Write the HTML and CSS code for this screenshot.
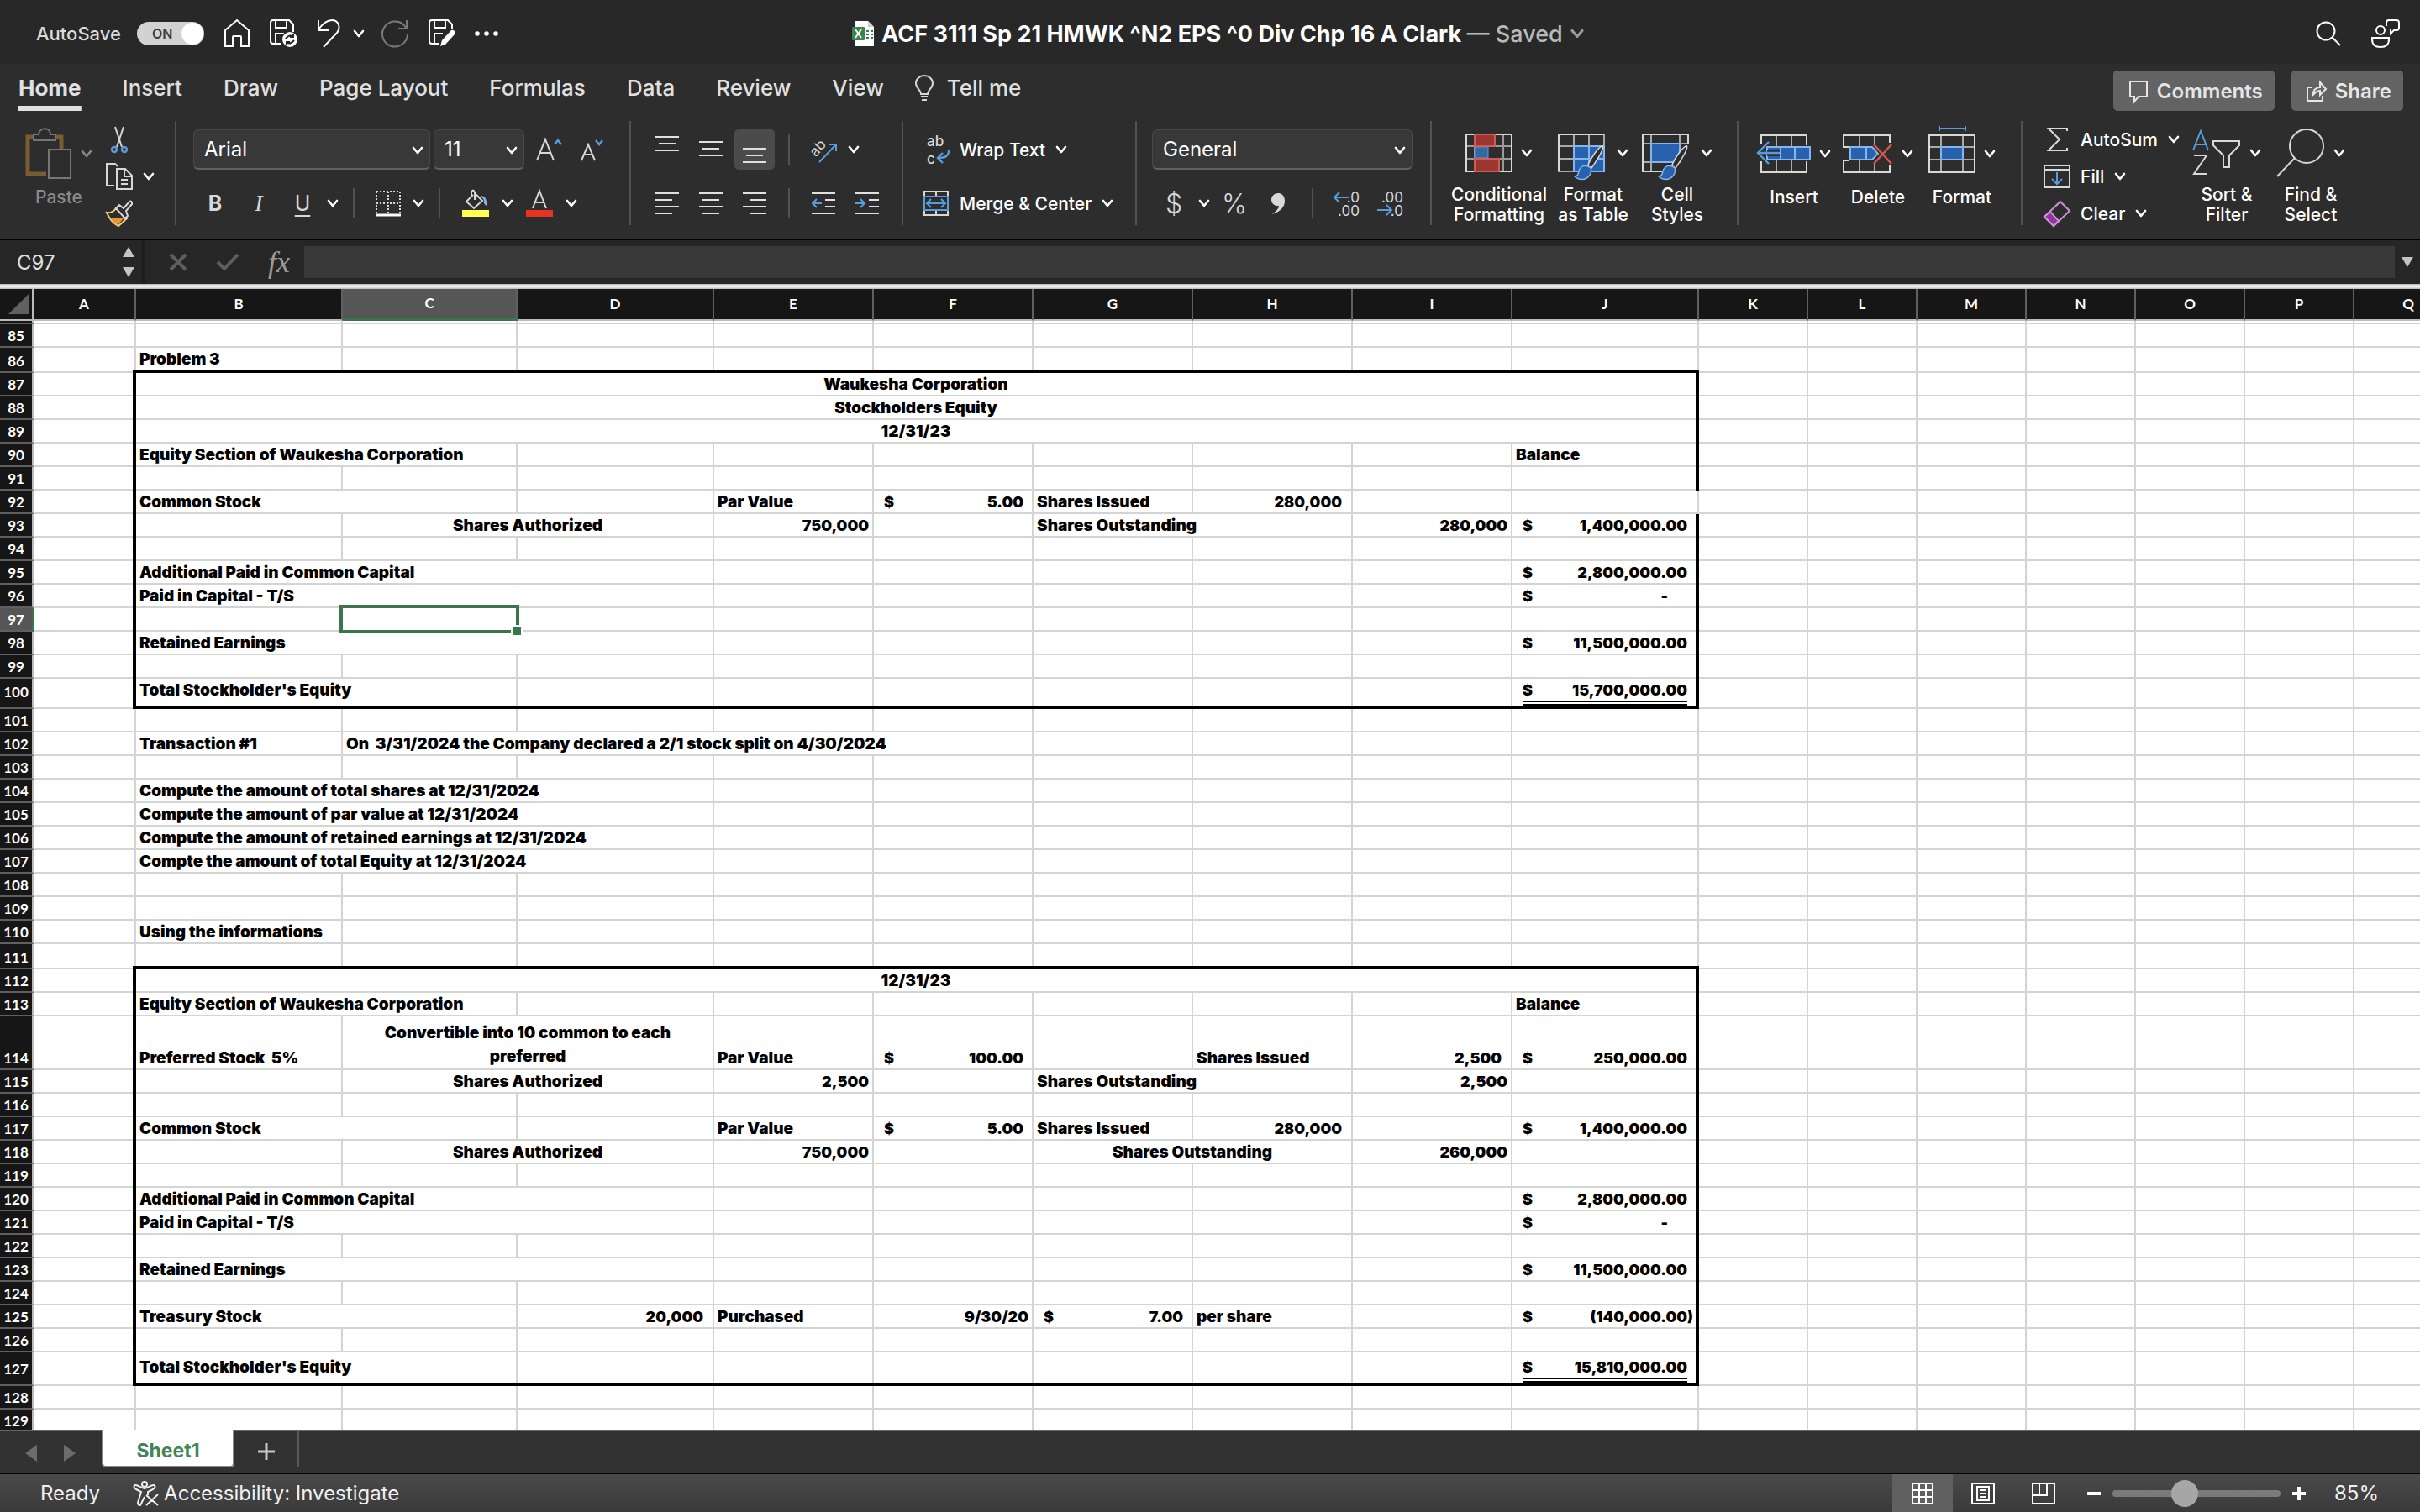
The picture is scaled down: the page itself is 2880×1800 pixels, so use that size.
FILE: index.html
```
<!DOCTYPE html>
<html lang="en">
<head>
    <meta charset="UTF-8">
    <meta name="viewport" content="width=device-width, initial-scale=1.0">
    <title>ACF 3111 Sp 21 HMWK ^N2 EPS ^0 Div Chp 16 A Clark</title>
    <link rel="stylesheet" href="styles.css">
</head>
<body>
    <!-- Shared icons -->
    <svg class="defs" aria-hidden="true">
        <symbol id="chev" viewBox="0 0 14 10"><path d="M2 2l5 6 5-6" fill="none" stroke="currentColor" stroke-width="2.6" stroke-linecap="round" stroke-linejoin="round"/></symbol>
        <symbol id="brush" viewBox="0 0 48 56"><path d="M46 1C40 1 27 20 22 32l6 4C35 26 48 6 46 1z" fill="#2d2d2d" stroke="#d8d8d8" stroke-width="2"/><path d="M27 36c2 10-5 18-14 18-5 0-9-2-12-5 5 0 6-3 7-8 2-8 11-12 19-5z" fill="#2862ae" stroke="#84b6ea" stroke-width="2"/></symbol>
    </svg>

    <div id="app">
        <header id="titlebar">
            <div class="quick">
                <label class="autosave" for="autosave">AutoSave</label>
                <span class="toggle"><input type="checkbox" id="autosave" checked><span class="toggle-text">ON</span></span>
                <button class="qbtn" aria-label="Home"><svg width="32" height="34" viewBox="0 0 32 34"><path d="M2 13L16 1l14 12v19h-9V21q0-1-1-1h-8q-1 0-1 1v11H2z" fill="none" stroke="#fff" stroke-width="2"/></svg></button>
                <button class="qbtn" aria-label="Save"><svg width="34" height="34" viewBox="0 0 34 34"><path d="M13 29H4q-3 0-3-3V4q0-3 3-3h19l5 5v9M7 1v9h13V1M7 29V17h10" fill="none" stroke="#fff" stroke-width="2"/><circle cx="24" cy="24" r="9" fill="#fff"/><path d="M19 23q5-6 9-2m0-4v4h-4M29 25q-5 6-9 2m0 4v-4h4" fill="none" stroke="#282828" stroke-width="2"/></svg></button>
                <button class="qbtn" aria-label="Undo"><svg width="28" height="34" viewBox="0 0 28 34"><path d="M1 1v12h12M1 12C6 5 11 1 17 1c8 0 11 9 6 15L7 33" fill="none" stroke="#fff" stroke-width="2"/></svg></button>
                <button class="chevbtn" aria-label="Undo list"><svg class="chev"><use href="#chev"/></svg></button>
                <button class="qbtn" aria-label="Redo"><svg width="34" height="34" viewBox="0 0 34 34"><path d="M31 1v10H21M30 10A15 15 0 1 0 32 18" fill="none" stroke="#7a7a7a" stroke-width="2"/></svg></button>
                <button class="qbtn" aria-label="Save as"><svg width="32" height="34" viewBox="0 0 32 34"><path d="M12 29H4q-3 0-3-3V4q0-3 3-3h19l5 5v6M7 1v9h13V1M7 29V17h10" fill="none" stroke="#fff" stroke-width="2"/><path d="M14 32l2-7 11-12q2-1 4 1 1 2 0 4L20 30z" fill="#fff"/></svg></button>
                <button class="qbtn" aria-label="More"><svg width="28" height="8" viewBox="0 0 28 8"><g fill="#fff"><circle cx="3" cy="4" r="2.8"/><circle cx="14" cy="4" r="2.8"/><circle cx="25" cy="4" r="2.8"/></g></svg></button>
            </div>
            <div class="doc">
                <svg width="28" height="32" viewBox="0 0 28 32"><path d="M5 1h15l7 7v23H5z" fill="#fff"/><path d="M20 1v7h7z" fill="#cfcfcf"/><path d="M18 12h3v2h-3zM23 12h3v2h-3zM18 16h3v2h-3zM23 16h3v2h-3zM18 20h3v2h-3zM23 20h3v2h-3z" fill="#2f7d4b"/><rect x="1" y="8" width="15" height="16" rx="1" fill="#3a8452"/><path d="M5 11l7 10M12 11L5 21" stroke="#fff" stroke-width="2"/></svg>
                <h1>ACF 3111 Sp 21 HMWK ^N2 EPS ^0 Div Chp 16 A Clark <span>— Saved</span></h1>
                <svg class="chev dim"><use href="#chev"/></svg>
            </div>
            <div class="right">
                <button class="qbtn" aria-label="Search"><svg width="30" height="30" viewBox="0 0 30 30"><circle cx="12" cy="12" r="10.5" fill="none" stroke="#fff" stroke-width="2"/><path d="M19 19l10 10" stroke="#fff" stroke-width="2"/></svg></button>
                <button class="qbtn" aria-label="Presence"><svg width="34" height="34" viewBox="0 0 34 34"><g fill="none" stroke="#fff" stroke-width="2"><circle cx="11" cy="13" r="5"/><path d="M1 22h20v2c0 6-4 9-10 9S1 30 1 24zM20 1h10q3 0 3 3v6q0 3-3 3h-3l-4 4v-4h-1M18 8V4q0-3 3-3"/></g></svg></button>
            </div>
        </header>

        <nav id="tabs">
            <button class="tab active">Home</button>
            <button class="tab">Insert</button>
            <button class="tab">Draw</button>
            <button class="tab">Page Layout</button>
            <button class="tab">Formulas</button>
            <button class="tab">Data</button>
            <button class="tab">Review</button>
            <button class="tab">View</button>
            <button class="tab tellme"><svg width="22" height="32" viewBox="0 0 22 32"><path d="M7 23c0-5-6-7-6-13a10 9 0 0 1 20 0c0 6-6 8-6 13zM7 26h8M8 30h6" fill="none" stroke="#d8d8d8" stroke-width="2"/></svg>Tell me</button>
            <div class="actions">
                <button class="pill"><svg width="24" height="26" viewBox="0 0 24 26"><path d="M2 1h20v18H12l-5 6v-6H2z" fill="none" stroke="#e6e6e6" stroke-width="2"/></svg>Comments</button>
                <button class="pill"><svg width="24" height="26" viewBox="0 0 24 26"><path d="M6 8H1v16h18v-6M7 18c1-7 4-10 9-10V2l7 8-7 7v-5c-4 0-6 2-9 6z" fill="none" stroke="#e6e6e6" stroke-width="2"/></svg>Share</button>
            </div>
        </nav>

        <div id="ribbon">
            <section class="group clipboard">
                <button class="big off">
                    <span class="pic"><svg width="56" height="62" viewBox="0 0 56 62"><path d="M10 11H3v44h22M36 11h7v14" fill="none" stroke="#7a5c33" stroke-width="5"/><path d="M10 15V8h6c1-9 14-9 14 0h6v7z" fill="#2d2d2d" stroke="#777" stroke-width="2"/><rect x="28" y="26" width="26" height="34" fill="#2d2d2d" stroke="#777" stroke-width="2"/></svg><svg class="chev"><use href="#chev"/></svg></span>
                    <span class="label">Paste</span>
                </button>
                <div class="stack">
                    <button class="small" aria-label="Cut"><svg width="32" height="32" viewBox="0 0 32 32"><path d="M11 1l8 24M21 1l-8 24" stroke="#d8d8d8" stroke-width="2"/><g fill="none" stroke="#5a9bdc" stroke-width="2.4"><circle cx="10" cy="28" r="3"/><circle cx="22" cy="28" r="3"/></g></svg></button>
                    <button class="small" aria-label="Copy"><svg width="32" height="32" viewBox="0 0 32 32"><g fill="none" stroke="#d8d8d8" stroke-width="2"><path d="M10 27H1V1h10l3 3M13 7h10l8 8v16H13zM22 7v9h9M18 20h8M18 25h8"/></g></svg><svg class="chev"><use href="#chev"/></svg></button>
                    <button class="small" aria-label="Format painter"><svg width="32" height="32" viewBox="0 0 32 32"><path d="M1 15q7 1 11-5l13 12-10 9q-9-4-14-16z" fill="#2d2d2d" stroke="#f0cf85" stroke-width="2"/><path d="M6 22l16-1-8 9q-5-3-8-8z" fill="#e8962e"/><path d="M12 10l4-4 5 4 7-8q2-1 3 1v2l-7 8 2 6-3 3z" fill="#2d2d2d" stroke="#d8d8d8" stroke-width="2"/></svg></button>
                </div>
            </section>

            <section class="group font">
                <div class="row">
                    <span class="select wide"><select aria-label="Font"><option>Arial</option></select><svg class="chev"><use href="#chev"/></svg></span>
                    <span class="select narrow"><select aria-label="Font size"><option>11</option></select><svg class="chev"><use href="#chev"/></svg></span>
                    <button class="tool" aria-label="Grow font"><svg width="32" height="32" viewBox="0 0 32 32"><path d="M1 29L11 4l10 25M5 20h12" fill="none" stroke="#d8d8d8" stroke-width="2"/><path d="M22 10l4-5 4 5" fill="none" stroke="#5a9bdc" stroke-width="2.4"/></svg></button>
                    <button class="tool" aria-label="Shrink font"><svg width="32" height="32" viewBox="0 0 32 32"><path d="M2 29l8-19 8 19M5 22h10" fill="none" stroke="#d8d8d8" stroke-width="2"/><path d="M19 5l4 5 4-5" fill="none" stroke="#5a9bdc" stroke-width="2.4"/></svg></button>
                </div>
                <div class="row">
                    <button class="tool glyph bold">B</button>
                    <button class="tool glyph italic">I</button>
                    <button class="tool glyph under">U</button>
                    <button class="chevbtn" aria-label="Underline style"><svg class="chev"><use href="#chev"/></svg></button>
                    <span class="sep"></span>
                    <button class="tool" aria-label="Borders"><svg width="32" height="32" viewBox="0 0 32 32"><path d="M2 2h28M2 16h28M2 2v26M16 2v26M30 2v26" stroke="#d8d8d8" stroke-width="2" stroke-dasharray="2 2"/><path d="M1 30h30" stroke="#fff" stroke-width="3"/></svg></button>
                    <button class="chevbtn" aria-label="Border style"><svg class="chev"><use href="#chev"/></svg></button>
                    <span class="sep"></span>
                    <button class="tool swatch" aria-label="Fill color"><svg width="32" height="34" viewBox="0 0 32 34"><path d="M13 7L5 15l9 8 10-9-9-9M15 13V4q-2-5-4 0v5" fill="none" stroke="#d8d8d8" stroke-width="2"/><path d="M22 8q8 0 7 12-4-2-3-7z" fill="#84b6ea"/><path d="M0 25h32v8H0z" fill="#ffff54"/></svg></button>
                    <button class="chevbtn" aria-label="Fill colors"><svg class="chev"><use href="#chev"/></svg></button>
                    <button class="tool swatch" aria-label="Font color"><svg width="32" height="34" viewBox="0 0 32 34"><path d="M8 23l8-21 8 21M11 16h10" fill="none" stroke="#d8d8d8" stroke-width="2"/><path d="M0 25h32v8H0z" fill="#e93223"/></svg></button>
                    <button class="chevbtn" aria-label="Font colors"><svg class="chev"><use href="#chev"/></svg></button>
                </div>
            </section>

            <section class="group align">
                <div class="row">
                    <button class="tool" aria-label="Top align"><svg width="28" height="32" viewBox="0 0 28 32"><path d="M0 1h28M4 9h20M0 17h28" stroke="#e0e0e0" stroke-width="2"/></svg></button>
                    <button class="tool" aria-label="Middle align"><svg width="28" height="32" viewBox="0 0 28 32"><path d="M0 7h28M4 15h20M0 23h28" stroke="#e0e0e0" stroke-width="2"/></svg></button>
                    <button class="tool active" aria-label="Bottom align"><svg width="28" height="32" viewBox="0 0 28 32"><path d="M0 15h28M4 23h20M0 31h28" stroke="#e0e0e0" stroke-width="2"/></svg></button>
                    <span class="sep"></span>
                    <button class="tool" aria-label="Orientation"><svg width="34" height="32" viewBox="0 0 34 32"><text x="5" y="25" transform="rotate(-50 7 22)" fill="#d8d8d8" class="abc">ab</text><path d="M12 31L32 10M24 10h8v8" fill="none" stroke="#5a9bdc" stroke-width="2"/></svg></button>
                    <button class="chevbtn" aria-label="Orientation list"><svg class="chev"><use href="#chev"/></svg></button>
                </div>
                <div class="row">
                    <button class="tool" aria-label="Align left"><svg width="28" height="28" viewBox="0 0 28 28"><path d="M0 2h28M0 10h20M0 18h28M0 26h20" stroke="#e0e0e0" stroke-width="2"/></svg></button>
                    <button class="tool" aria-label="Center"><svg width="28" height="28" viewBox="0 0 28 28"><path d="M0 2h28M4 10h20M0 18h28M4 26h20" stroke="#e0e0e0" stroke-width="2"/></svg></button>
                    <button class="tool" aria-label="Align right"><svg width="28" height="28" viewBox="0 0 28 28"><path d="M0 2h28M8 10h20M0 18h28M8 26h20" stroke="#e0e0e0" stroke-width="2"/></svg></button>
                    <span class="sep"></span>
                    <button class="tool" aria-label="Decrease indent"><svg width="28" height="28" viewBox="0 0 28 28"><path d="M0 2h28M16 10h12M16 18h12M0 26h28" stroke="#e0e0e0" stroke-width="2"/><path d="M12 14H1M6 9l-5 5 5 5" fill="none" stroke="#5a9bdc" stroke-width="2"/></svg></button>
                    <button class="tool" aria-label="Increase indent"><svg width="28" height="28" viewBox="0 0 28 28"><path d="M0 2h28M16 10h12M16 18h12M0 26h28" stroke="#e0e0e0" stroke-width="2"/><path d="M0 14h11M6 9l5 5-5 5" fill="none" stroke="#5a9bdc" stroke-width="2"/></svg></button>
                </div>
            </section>

            <section class="group wrap">
                <div class="row">
                    <button class="texted"><svg width="32" height="34" viewBox="0 0 32 34"><text x="5" y="13" fill="#d8d8d8" class="abc">ab</text><text x="5" y="34" fill="#d8d8d8" class="abc">c</text><path d="M31 18c0 7-4 9-13 9M24 21l-6 6 6 6" fill="none" stroke="#5a9bdc" stroke-width="2.4"/></svg>Wrap Text<svg class="chev"><use href="#chev"/></svg></button>
                </div>
                <div class="row">
                    <button class="texted"><svg width="32" height="32" viewBox="0 0 32 32"><path d="M2 2h28v28H2zM16 2v6M16 24v6" fill="none" stroke="#d8d8d8" stroke-width="2"/><path d="M2 8h28v16H2z" fill="#2d2d2d" stroke="#5a9bdc" stroke-width="2"/><path d="M6 16h20M10 11l-5 5 5 5M22 11l5 5-5 5" fill="none" stroke="#5a9bdc" stroke-width="2"/></svg>Merge &amp; Center<svg class="chev"><use href="#chev"/></svg></button>
                </div>
            </section>

            <section class="group number">
                <div class="row">
                    <span class="select full"><select aria-label="Number format"><option>General</option></select><svg class="chev"><use href="#chev"/></svg></span>
                </div>
                <div class="row">
                    <button class="tool thin">$</button>
                    <button class="chevbtn" aria-label="Currency list"><svg class="chev"><use href="#chev"/></svg></button>
                    <button class="tool thin">%</button>
                    <button class="tool" aria-label="Comma style"><svg width="18" height="28" viewBox="0 0 18 28"><path d="M9 2c5 0 8 4 8 9 0 8-6 13-15 16 5-4 8-7 8-10C5 18 1 14 1 10c0-5 4-8 8-8z" fill="#d8d8d8"/></svg></button>
                    <span class="sep"></span>
                    <button class="dec" aria-label="Increase decimal"><svg width="32" height="32" viewBox="0 0 32 32"><text x="31" y="15" class="num">.0</text><text x="31" y="31" class="num">.00</text><path d="M18 9H1M7 3L1 9l6 6" fill="none" stroke="#5a9bdc" stroke-width="2"/></svg></button>
                    <button class="dec" aria-label="Decrease decimal"><svg width="32" height="32" viewBox="0 0 32 32"><text x="31" y="15" class="num">.00</text><text x="31" y="31" class="num">.0</text><path d="M0 24h17M11 18l6 6-6 6" fill="none" stroke="#5a9bdc" stroke-width="2"/></svg></button>
                </div>
            </section>

            <section class="group styles">
                <button class="big first">
                    <span class="pic"><svg width="56" height="46" viewBox="0 0 56 46"><path d="M1 1h54v44H1zM1 15h54M1 30h54M11 1v44M45 1v44" fill="none" stroke="#9a9a9a" stroke-width="2"/><path d="M1 1h54v44H1z" fill="none" stroke="#d8d8d8" stroke-width="2"/><path d="M11 16h16v13H11z" fill="#34699f" stroke="#5a9bdc" stroke-width="1"/><path d="M28 16h16v13H28z" fill="#2d2d2d"/><path d="M11 1h24v14H11zM11 30h29v15H11z" fill="#9b3631" stroke="#d25b55" stroke-width="2"/></svg><svg class="chev"><use href="#chev"/></svg></span>
                    <span class="label">Conditional<br>Formatting</span>
                </button>
                <button class="big">
                    <span class="pic"><svg width="60" height="46" viewBox="0 0 60 46"><path d="M1 1h54v44H1zM1 15h54M1 30h18M19 1v44M37 1v14" fill="none" stroke="#a8a8a8" stroke-width="2"/><path d="M1 45V1h54" fill="none" stroke="#d8d8d8" stroke-width="2"/><path d="M19 15h36v30H19zM37 15v30M19 30h36" fill="#2862ae" stroke="#84b6ea" stroke-width="2"/><use href="#brush" x="14" y="14" width="46" height="42"/></svg><svg class="chev"><use href="#chev"/></svg></span>
                    <span class="label">Format<br>as Table</span>
                </button>
                <button class="big">
                    <span class="pic"><svg width="60" height="46" viewBox="0 0 60 46"><path d="M1 12h54M1 34h14M11 1v44M45 1v14" fill="none" stroke="#a8a8a8" stroke-width="2"/><path d="M24 45H1V1h54v12" fill="none" stroke="#d8d8d8" stroke-width="2"/><path d="M11 12h34v22H11z" fill="#2862ae" stroke="#84b6ea" stroke-width="2"/><use href="#brush" x="14" y="14" width="46" height="42"/></svg><svg class="chev"><use href="#chev"/></svg></span>
                    <span class="label">Cell<br>Styles</span>
                </button>
            </section>

            <section class="group cells">
                <button class="big">
                    <span class="pic"><svg width="64" height="46" viewBox="0 0 64 46"><path d="M23 1v44M41 1v44" stroke="#a8a8a8" stroke-width="2"/><path d="M5 12V1h54v12M5 32v13h54V32" fill="none" stroke="#d8d8d8" stroke-width="2"/><path d="M12 15h51v15H12zM28 15v15M45 15v15" fill="#2862ae" stroke="#84b6ea" stroke-width="2"/><path d="M12 22.500h15" stroke="#2d2d2d" stroke-width="7"/><path d="M27 22H1M14 9L1 22l13 13" fill="none" stroke="#5a9bdc" stroke-width="2.400"/></svg><svg class="chev"><use href="#chev"/></svg></span>
                    <span class="label">Insert</span>
                </button>
                <button class="big">
                    <span class="pic"><svg width="60" height="46" viewBox="0 0 60 46"><path d="M20 1v14M38 1v12M20 31v14M38 33v12" stroke="#a8a8a8" stroke-width="2"/><path d="M8 15H1V1h55v9M8 31H1v14h55V36" fill="none" stroke="#d8d8d8" stroke-width="2"/><path d="M9 15h26l7 8-7 7H9zM28 15v15" fill="#2862ae" stroke="#84b6ea" stroke-width="2"/><path d="M37 12l21 23M58 12L37 35" stroke="#dc5750" stroke-width="2.400"/></svg><svg class="chev"><use href="#chev"/></svg></span>
                    <span class="label">Delete</span>
                </button>
                <button class="big">
                    <span class="pic"><svg width="56" height="46" viewBox="0 0 56 46"><path d="M1 15h54M1 30h54M15 1v44M41 1v44" stroke="#a8a8a8" stroke-width="2"/><path d="M1 1h54v44H1z" fill="none" stroke="#d8d8d8" stroke-width="2"/><path d="M15 15h26v15H15z" fill="#2862ae" stroke="#84b6ea" stroke-width="2"/><path d="M13-7h31M13-10v6M44-10v6" stroke="#5a9bdc" stroke-width="2"/></svg><svg class="chev"><use href="#chev"/></svg></span>
                    <span class="label">Format</span>
                </button>
            </section>

            <section class="group editing">
                <div class="stack">
                    <button class="small"><svg width="32" height="32" viewBox="0 0 32 32"><path d="M28 6V3H6l13 13L6 29h22v-3" fill="none" stroke="#d8d8d8" stroke-width="2"/></svg>AutoSum<svg class="chev"><use href="#chev"/></svg></button>
                    <button class="small"><svg width="32" height="32" viewBox="0 0 32 32"><path d="M1 3h30v26H1zM1 8h30" fill="none" stroke="#d8d8d8" stroke-width="2"/><path d="M16 11v14M10 19l6 6 6-6" fill="none" stroke="#5a9bdc" stroke-width="2"/></svg>Fill<svg class="chev"><use href="#chev"/></svg></button>
                    <button class="small"><svg width="32" height="32" viewBox="0 0 32 32"><path d="M20 2l11 11-19 18L1 20z" fill="none" stroke="#cf8fd8" stroke-width="2"/><path d="M8 14l10 11-6 6L1 20z" fill="#8d359c" stroke="#cf8fd8" stroke-width="2"/></svg>Clear<svg class="chev"><use href="#chev"/></svg></button>
                </div>
                <button class="big">
                    <span class="pic"><svg width="58" height="54" viewBox="0 0 58 54"><path d="M1 24L10 1l9 23M4 17h12" fill="none" stroke="#5a9bdc" stroke-width="2"/><path d="M2 30h15L2 52h16" fill="none" stroke="#d8d8d8" stroke-width="2"/><path d="M25 13h31v5L44 30v14h-7V30L25 18z" fill="none" stroke="#d8d8d8" stroke-width="2"/></svg><svg class="chev"><use href="#chev"/></svg></span>
                    <span class="label">Sort &amp;<br>Filter</span>
                </button>
                <button class="big">
                    <span class="pic"><svg width="58" height="60" viewBox="0 0 58 60"><circle cx="36" cy="22" r="20" fill="none" stroke="#d8d8d8" stroke-width="2"/><path d="M22 36L1 58" stroke="#d8d8d8" stroke-width="2"/></svg><svg class="chev"><use href="#chev"/></svg></span>
                    <span class="label">Find &amp;<br>Select</span>
                </button>
            </section>
        </div>

        <div id="formula-bar">
            <div class="namebox">
                <input type="text" aria-label="Name box" value="C97">
                <svg width="16" height="36" viewBox="0 0 16 36"><path d="M8 0l7 12H1zM8 36l7-12H1z" fill="#c4c4c4"/></svg>
            </div>
            <div class="fx">
                <svg width="22" height="22" viewBox="0 0 22 22"><path d="M2 2l18 18M20 2L2 20" stroke="#5e5e5e" stroke-width="4"/></svg>
                <svg width="28" height="22" viewBox="0 0 28 22"><path d="M2 11l8 8L26 2" fill="none" stroke="#5e5e5e" stroke-width="4"/></svg>
                <span>fx</span>
            </div>
            <input type="text" class="formula" aria-label="Formula">
            <svg class="expand" width="14" height="12" viewBox="0 0 14 12"><path d="M0 0h14L7 12z" fill="#c4c4c4"/></svg>
        </div>

        <main id="sheet">
            <table id="grid">
                <colgroup id="cols"></colgroup>
                <thead id="head"></thead>
                <tbody id="rows"></tbody>
            </table>
        </main>

        <div id="sheet-tabs">
            <button class="nav" aria-label="Previous sheet"><svg width="14" height="20" viewBox="0 0 14 20"><path d="M14 0v20L0 10z" fill="#6c6c6c"/></svg></button>
            <button class="nav" aria-label="Next sheet"><svg width="14" height="20" viewBox="0 0 14 20"><path d="M0 0v20l14-10z" fill="#6c6c6c"/></svg></button>
            <button class="sheet-tab">Sheet1</button>
            <button class="add" aria-label="Add sheet"><svg width="20" height="20" viewBox="0 0 20 20"><path d="M10 0v20M0 10h20" stroke="#c8c8c8" stroke-width="3"/></svg></button>
        </div>

        <footer id="status">
            <span class="ready">Ready</span>
            <button class="access"><svg width="30" height="30" viewBox="0 0 30 30"><g fill="none" stroke="#f0f0f0" stroke-width="2"><circle cx="13" cy="4" r="3"/><path d="M13 9C9 9 5 4 2 5s-1 4 1 5l6 3-4 13q0 3 3 3l5-10M13 9c4 0 8-5 11-4s1 4-1 5l-6 3v4M15 17l14 12M29 16L15 29"/></g></svg>Accessibility: Investigate</button>
            <div class="views">
                <button class="view active" aria-label="Normal view"><svg width="26" height="26" viewBox="0 0 26 26"><path d="M1 1h24v24H1zM1 9h24M1 17h24M9 1v24M17 1v24" fill="none" stroke="#fff" stroke-width="2"/></svg></button>
                <button class="view" aria-label="Page layout view"><svg width="28" height="26" viewBox="0 0 28 26"><path d="M1 1h26v24H1zM7 5h14v16H7zM10 9h8M10 13h8M10 17h8" fill="none" stroke="#fff" stroke-width="2"/></svg></button>
                <button class="view" aria-label="Page break view"><svg width="28" height="26" viewBox="0 0 28 26"><path d="M1 1h26v24H1zM9 1v14M18 1v14H1" fill="none" stroke="#fff" stroke-width="2"/></svg></button>
            </div>
            <button class="zoom-step" aria-label="Zoom out"><svg width="16" height="16" viewBox="0 0 16 16"><path d="M0 8h16" stroke="#fff" stroke-width="4"/></svg></button>
            <input type="range" id="zoom" min="0" max="120" value="50" aria-label="Zoom">
            <button class="zoom-step" aria-label="Zoom in"><svg width="16" height="16" viewBox="0 0 16 16"><path d="M0 8h16M8 0v16" stroke="#fff" stroke-width="4"/></svg></button>
            <label class="percent" for="zoom">85%</label>
        </footer>
    </div>

    <script src="script.js"></script>
</body>
</html>
```
FILE: styles.css
```
/* General Reset */
*, *::before, *::after {
    margin: 0;
    padding: 0;
    box-sizing: border-box;
}
body {
    font-family: Inter, 'Liberation Sans', sans-serif;
    background-color: #282828;
    color: #ffffff;
    overflow: hidden;
}
button, input, select {
    font-family: inherit;
    color: inherit;
    background: none;
    border: none;
}
svg {
    display: block;
    flex: none;
    overflow: visible;
}
.defs {
    position: absolute;
    width: 0;
    height: 0;
}
#app {
    display: flex;
    flex-direction: column;
    height: 100vh;
}
.chev {
    width: 14px;
    height: 10px;
}
.chev.dim {
    width: 18px;
    height: 12px;
    color: #9c9c9c;
}

/* Title bar */
#titlebar {
    display: grid;
    grid-template-columns: 1fr auto 1fr;
    align-items: center;
    height: 76px;
    padding: 4px 24px 0 43px;
    background-color: #282828;
}
.quick {
    display: flex;
    align-items: center;
    gap: 23px;
}
.quick .chevbtn {
    margin: 0 -7px 0 -12px;
}
.autosave {
    font-size: 22px;
    font-weight: 500;
    color: #dcdcdc;
}
.toggle {
    position: relative;
    margin-left: -4px;
    font-size: 16px;
    font-weight: 600;
    color: #3c3c3c;
}
.toggle input {
    appearance: none;
    display: block;
    width: 80px;
    height: 28px;
    border-radius: 14px;
    background-color: #d2d2d2;
}
.toggle input::after {
    content: '';
    display: block;
    position: relative;
    left: 53px;
    top: 1px;
    width: 26px;
    height: 26px;
    border-radius: 50%;
    background-color: #ffffff;
}
.toggle-text {
    position: absolute;
    left: 18px;
    top: 4px;
    line-height: 20px;
}
.doc {
    display: flex;
    align-items: center;
    gap: 8px;
}
.doc h1 {
    font-size: 27px;
    font-weight: 700;
}
.doc h1 span {
    color: #b9b9b9;
    font-weight: 500;
}
.right {
    display: flex;
    justify-content: flex-end;
    align-items: center;
    gap: 36px;
}

/* Ribbon tabs */
#tabs {
    display: flex;
    align-items: center;
    gap: 49px;
    height: 68px;
    padding: 0 20px 4px 22px;
    background-color: #2d2d2d;
}
.tab {
    height: 48px;
    padding-bottom: 6px;
    font-size: 26px;
    line-height: 42px;
    font-weight: 500;
    color: #e0e0e0;
}
.tab.active {
    font-weight: 700;
    background: linear-gradient(#e0e0e0, #e0e0e0) bottom / 100% 6px no-repeat;
}
.tellme {
    display: flex;
    align-items: center;
    gap: 16px;
    margin-left: -12px;
}
.actions {
    display: flex;
    gap: 20px;
    margin-left: auto;
}
.pill {
    display: flex;
    align-items: center;
    gap: 10px;
    height: 48px;
    padding: 0 14px 0 18px;
    border-radius: 5px;
    background-color: #636363;
    border-top: 1px solid #7a7a7a;
    font-size: 24px;
    font-weight: 600;
    color: #e6e6e6;
}

/* Ribbon */
#ribbon {
    display: flex;
    height: 142px;
    padding-bottom: 16px;
    background-color: #2d2d2d;
    border-bottom: 2px solid #000000;
}
.group {
    flex: none;
    border-right: 2px solid #525252;
}
.group:last-child {
    border-right: none;
}
.clipboard, .styles, .cells, .editing {
    display: flex;
}
.clipboard {
    width: 210px;
    padding-left: 20px;
}
.font {
    width: 541px;
    padding: 10px 0 0 20px;
}
.align {
    width: 324px;
    padding: 10px 0 0 17px;
}
.wrap {
    width: 278px;
    padding: 10px 0 0 23px;
}
.number {
    width: 351px;
    padding: 10px 0 0 18px;
}
.styles {
    width: 365px;
    padding-left: 18px;
}
.cells {
    width: 338px;
    padding-left: 16px;
}
.editing {
    padding-left: 25px;
}
.row {
    display: flex;
    align-items: center;
    height: 48px;
    margin-bottom: 16px;
}
.tool {
    display: flex;
    justify-content: center;
    align-items: center;
    width: 52px;
    height: 48px;
}
.tool.active {
    width: 48px;
    margin: 0 2px;
    border-radius: 5px;
    background-color: #4b4b4b;
}
.tool.swatch {
    width: 56px;
}
.glyph {
    font-size: 25px;
    color: #d8d8d8;
}
.bold {
    font-weight: 700;
}
.italic {
    font-family: 'Liberation Serif', serif;
    font-size: 28px;
    font-style: italic;
}
.under {
    text-decoration: underline;
    text-underline-offset: 5px;
}
.thin {
    font-size: 32px;
    font-weight: 300;
    color: #d8d8d8;
}
.chevbtn {
    display: flex;
    justify-content: center;
    align-items: center;
    width: 20px;
    height: 32px;
}
.sep {
    width: 2px;
    height: 36px;
    margin: 0 14px;
    background-color: #525252;
}
.dec {
    margin: 0 10px;
}
.abc {
    font-size: 17px;
}
.num {
    font-size: 17px;
    fill: #d8d8d8;
    text-anchor: end;
}
.select {
    position: relative;
    margin-right: 4px;
}
.select select {
    appearance: none;
    display: block;
    width: 100%;
    height: 48px;
    padding-left: 12px;
    border: 1px solid #484848;
    border-bottom: 2px solid #606060;
    border-radius: 6px;
    background-color: #383838;
    font-size: 24px;
}
.select .chev {
    position: absolute;
    right: 8px;
    top: 20px;
}
.wide {
    width: 282px;
}
.narrow {
    width: 108px;
}
.full {
    width: 310px;
}
.texted, .small {
    display: flex;
    align-items: center;
    gap: 12px;
    font-size: 21px;
    font-weight: 500;
}
.stack {
    display: flex;
    flex-direction: column;
}
.clipboard .stack {
    padding-left: 6px;
}
.editing .stack {
    width: 168px;
}
.small {
    flex: none;
    height: 44px;
}
.big {
    display: flex;
    flex-direction: column;
    align-items: center;
    width: 100px;
    padding-top: 6px;
}
.big.first {
    width: 124px;
}
.pic {
    display: flex;
    justify-content: center;
    align-items: center;
    gap: 10px;
    height: 66px;
}
.label {
    margin-top: 7px;
    font-size: 21px;
    line-height: 24px;
    font-weight: 500;
}
.off {
    color: #8a8a8a;
}

/* Formula bar */
#formula-bar {
    display: flex;
    align-items: center;
    height: 58px;
    padding-bottom: 6px;
    background: linear-gradient(#b4b4b4, #ffffff 50%, #b4b4b4) bottom / 100% 6px no-repeat, #262626;
}
.namebox {
    display: flex;
    align-items: center;
    justify-content: space-between;
    width: 172px;
    height: 52px;
    padding: 0 7px 0 20px;
    border-right: 4px solid #1e1e1e;
}
.namebox input {
    width: 100px;
    font-size: 24px;
    color: #e0e0e0;
}
.fx {
    display: flex;
    align-items: center;
    gap: 34px;
    width: 190px;
    padding-left: 29px;
    font-family: 'Liberation Serif', serif;
    font-size: 36px;
    font-style: italic;
    line-height: 48px;
    color: #9a9a9a;
}
.formula {
    flex: 1;
    height: 38px;
    background-color: #393939;
    font-size: 24px;
}
.expand {
    margin: 0 8px;
}

/* Spreadsheet grid */
#sheet {
    flex: 1;
    min-height: 0;
    overflow: hidden;
    background-color: #ffffff;
}
#grid {
    table-layout: fixed;
    width: 0;
    border-collapse: separate;
    border-spacing: 0;
    font-size: 19px;
    line-height: 24px;
    font-weight: 900;
    color: #000000;
}
#grid th {
    background-color: #161616;
    color: #ffffff;
    font-family: Lato, sans-serif;
    font-size: 17px;
    font-weight: 700;
    border-right: 2px solid #606060;
}
#grid thead th {
    height: 38px;
    border-bottom: 2px solid #bbbbbb;
}
#grid thead th:first-child, #grid tbody th {
    border-right-color: #bbbbbb;
}
#grid tbody th {
    vertical-align: bottom;
    border-bottom: 2px solid #606060;
}
#grid th.on {
    background-color: #565656;
}
#grid thead th.on {
    border-bottom: 4px solid #3b754b;
}
#grid tbody th.on {
    border-right-color: #3b754b;
}
.all {
    width: 24px;
    height: 24px;
    margin-left: 10px;
}
#grid td {
    position: relative;
    padding: 0 4px;
    vertical-align: bottom;
    white-space: pre;
    border-right: 2px solid #d4d4d4;
    border-bottom: 2px solid #d4d4d4;
}
#grid td.thick-right {
    border-right: 4px solid #000000;
}
#grid td.thick-bottom {
    border-bottom: 4px solid #000000;
}
/* Square off the border joins */
.thick-right::before {
    content: '';
    position: absolute;
    top: 0;
    right: -4px;
    bottom: -2px;
    width: 4px;
    background-color: #000000;
}
.thick-bottom::after {
    content: '';
    position: absolute;
    left: 0;
    right: -2px;
    bottom: -4px;
    height: 4px;
    background-color: #000000;
}
.corner::after {
    content: '';
    position: absolute;
    right: -2px;
    bottom: -2px;
    width: 4px;
    height: 4px;
    background-color: #000000;
}
.c {
    text-align: center;
}
.r {
    text-align: right;
}
#grid td.r, #grid td.n, #grid td.acct {
    font-size: 18px;
}
#grid td.n {
    text-align: right;
    padding-right: 11px;
}
#grid td.w {
    text-align: center;
    white-space: normal;
    line-height: 28px;
    padding: 0 30px;
}
#grid .tall td, #grid .tall th {
    padding-bottom: 6px;
}
#grid .tall td.acct {
    padding-bottom: 0;
}
#grid td.acct {
    padding: 0 10px 0 12px;
}
.money {
    display: flex;
    justify-content: space-between;
}
.tall .money {
    border-bottom: 6px double #000000;
}
.neg {
    margin-right: -7px;
}
.dash {
    margin-right: 23px;
}
.cursor {
    position: absolute;
    left: -4px;
    top: -4px;
    right: -4px;
    bottom: -4px;
    z-index: 1;
    border: 4px solid #3b754b;
}
.cursor::after {
    content: '';
    position: absolute;
    right: -8px;
    bottom: -8px;
    width: 14px;
    height: 14px;
    border: 2px solid #ffffff;
    background-color: #3b754b;
}

/* Sheet tabs */
#sheet-tabs {
    position: relative;
    display: flex;
    height: 53px;
    padding-left: 24px;
    background-color: #323232;
    border-top: 2px solid #666666;
    border-bottom: 2px solid #000000;
}
.nav {
    display: flex;
    justify-content: center;
    align-items: center;
    width: 46px;
    height: 51px;
}
.nav:first-child {
    width: 26px;
    margin-right: 10px;
}
.sheet-tab {
    width: 158px;
    height: 45px;
    margin: -2px 0 0 15px;
    padding-top: 6px;
    border: 2px solid #8a8a8a;
    border-top: none;
    border-radius: 0 0 5px 5px;
    background-color: #ffffff;
    color: #3f8555;
    font-size: 23px;
    font-weight: 700;
}
.add {
    display: flex;
    justify-content: center;
    align-items: center;
    width: 77px;
    height: 42px;
    padding-top: 6px;
    border-right: 2px solid #5a5a5a;
}

/* Status bar */
#status {
    display: flex;
    align-items: center;
    height: 45px;
    padding: 0 50px 0 48px;
    background: linear-gradient(#4a4a4a, #3a3a3a);
    font-size: 24px;
    color: #f0f0f0;
}
.access {
    display: flex;
    align-items: center;
    gap: 6px;
    margin-left: 40px;
    font-size: 24px;
}
.views {
    display: flex;
    margin-left: auto;
    margin-right: 2px;
}
.view {
    display: flex;
    justify-content: center;
    align-items: center;
    width: 72px;
    height: 45px;
}
.view.active {
    background-color: #606060;
}
.zoom-step {
    margin: 0 14px;
}
#zoom {
    appearance: none;
    width: 200px;
    height: 8px;
    border-radius: 4px;
    background-color: #7b7b7b;
}
#zoom::-webkit-slider-thumb {
    appearance: none;
    width: 32px;
    height: 32px;
    border-radius: 50%;
    background-color: #a6a6a6;
}
.percent {
    width: 72px;
    padding-left: 20px;
    font-size: 24px;
}
```
FILE: script.js
```
const colWidths = [40, 122, 246, 208, 234, 190, 190, 190, 190, 190, 222, 130, 130, 130, 130, 130, 130, 130];
const letters = 'ABCDEFGHIJKLMNOPQ';

// Row heights that differ from the default
const heights = { 84: 4, 86: 30, 100: 36, 111: 30, 114: 64, 127: 40 };
const boxes = [[87, 100], [112, 127]];

// [column, text, type, colspan]
// types: c center, r right, n number, w wrapped, $ accounting
const data = {
    86: [['B', 'Problem 3']],
    87: [['B', 'Waukesha Corporation', 'c', 9]],
    88: [['B', 'Stockholders Equity', 'c', 9]],
    89: [['B', '12/31/23', 'c', 9]],
    90: [['B', 'Equity Section of Waukesha Corporation', '', 2], ['J', 'Balance']],
    92: [['B', 'Common Stock', '', 2], ['E', 'Par Value'], ['F', '5.00', '$'], ['G', 'Shares Issued'], ['H', '280,000', 'n']],
    93: [['C', 'Shares Authorized', 'c', 2], ['E', '750,000', 'r'], ['G', 'Shares Outstanding', '', 2], ['I', '280,000', 'r'], ['J', '1,400,000.00', '$']],
    95: [['B', 'Additional Paid in Common Capital', '', 3], ['J', '2,800,000.00', '$']],
    96: [['B', 'Paid in Capital - T/S', '', 3], ['J', '-', '$']],
    98: [['B', 'Retained Earnings', '', 3], ['J', '11,500,000.00', '$']],
    100: [['B', "Total Stockholder's Equity", '', 2], ['J', '15,700,000.00', '$']],
    102: [['B', 'Transaction #1'], ['C', 'On  3/31/2024 the Company declared a 2/1 stock split on 4/30/2024', '', 4]],
    104: [['B', 'Compute the amount of total shares at 12/31/2024', '', 3]],
    105: [['B', 'Compute the amount of par value at 12/31/2024', '', 3]],
    106: [['B', 'Compute the amount of retained earnings at 12/31/2024', '', 3]],
    107: [['B', 'Compte the amount of total Equity at 12/31/2024', '', 3]],
    110: [['B', 'Using the informations']],
    112: [['B', '12/31/23', 'c', 9]],
    113: [['B', 'Equity Section of Waukesha Corporation', '', 2], ['J', 'Balance']],
    114: [['B', 'Preferred Stock  5%'], ['C', 'Convertible into 10 common to each preferred', 'w', 2], ['E', 'Par Value'], ['F', '100.00', '$'], ['H', 'Shares Issued'], ['I', '2,500', 'n'], ['J', '250,000.00', '$']],
    115: [['C', 'Shares Authorized', 'c', 2], ['E', '2,500', 'r'], ['G', 'Shares Outstanding', '', 2], ['I', '2,500', 'r']],
    117: [['B', 'Common Stock', '', 2], ['E', 'Par Value'], ['F', '5.00', '$'], ['G', 'Shares Issued'], ['H', '280,000', 'n'], ['J', '1,400,000.00', '$']],
    118: [['C', 'Shares Authorized', 'c', 2], ['E', '750,000', 'r'], ['G', 'Shares Outstanding', 'c', 2], ['I', '260,000', 'r']],
    120: [['B', 'Additional Paid in Common Capital', '', 3], ['J', '2,800,000.00', '$']],
    121: [['B', 'Paid in Capital - T/S', '', 3], ['J', '-', '$']],
    123: [['B', 'Retained Earnings', '', 3], ['J', '11,500,000.00', '$']],
    125: [['B', 'Treasury Stock', '', 2], ['D', '20,000', 'n'], ['E', 'Purchased'], ['F', '9/30/20', 'r'], ['G', '7.00', '$'], ['H', 'per share'], ['J', '(140,000.00)', '$']],
    127: [['B', "Total Stockholder's Equity", '', 2], ['J', '15,810,000.00', '$']]
};

function renderHead() {
    document.getElementById('cols').innerHTML = colWidths.map(w => `<col style="width:${w}px">`).join('');
    let html = '<tr><th><svg class="all" viewBox="0 0 24 24"><path d="M24 0v24H0z" fill="#606060"/></svg></th>';
    for (const letter of letters) {
        html += `<th scope="col"${letter === 'C' ? ' class="on"' : ''}>${letter}</th>`;
    }
    document.getElementById('head').innerHTML = html + '</tr>';
}

function money(text) {
    let cls = '';
    if (text === '-') cls = 'dash';
    if (text[0] === '(') cls = 'neg';
    return `<div class="money"><span>$</span><span class="${cls}">${text}</span></div>`;
}

function renderRow(n) {
    const inBox = boxes.some(b => n >= b[0] && n <= b[1]);
    const edge = boxes.some(b => n === b[0] - 1 || n === b[1]);
    const cells = data[n] || [];
    const tr = document.createElement('tr');
    tr.style.height = (heights[n] || 28) + 'px';
    if (n === 100 || n === 127) tr.className = 'tall';

    const th = document.createElement('th');
    th.scope = 'row';
    th.textContent = n === 84 ? '' : n;
    if (n === 97) th.className = 'on';
    tr.appendChild(th);

    for (let i = 0; i < letters.length;) {
        const td = document.createElement('td');
        const cell = cells.find(c => c[0] === letters[i]);
        const span = cell && cell[3] ? cell[3] : 1;
        const last = i + span - 1;
        if (cell) {
            const type = cell[2];
            td.colSpan = span;
            if (type === '$') {
                td.className = 'acct';
                td.innerHTML = money(cell[1]);
            } else {
                td.className = type || '';
                td.textContent = cell[1];
            }
        }
        if (n === 97 && letters[i] === 'C') {
            td.innerHTML = '<div class="cursor"></div>';
        }
        // Heavy outline round each problem
        if (inBox && (i === 0 || (last === 9 && n !== 92))) td.classList.add('thick-right');
        if (edge && i >= 1 && last <= 9) td.classList.add('thick-bottom');
        if (edge && i === 0 && !inBox) td.classList.add('corner');
        tr.appendChild(td);
        i += span;
    }
    return tr;
}

renderHead();
for (let n = 84; n <= 129; n++) {
    document.getElementById('rows').appendChild(renderRow(n));
}
```
